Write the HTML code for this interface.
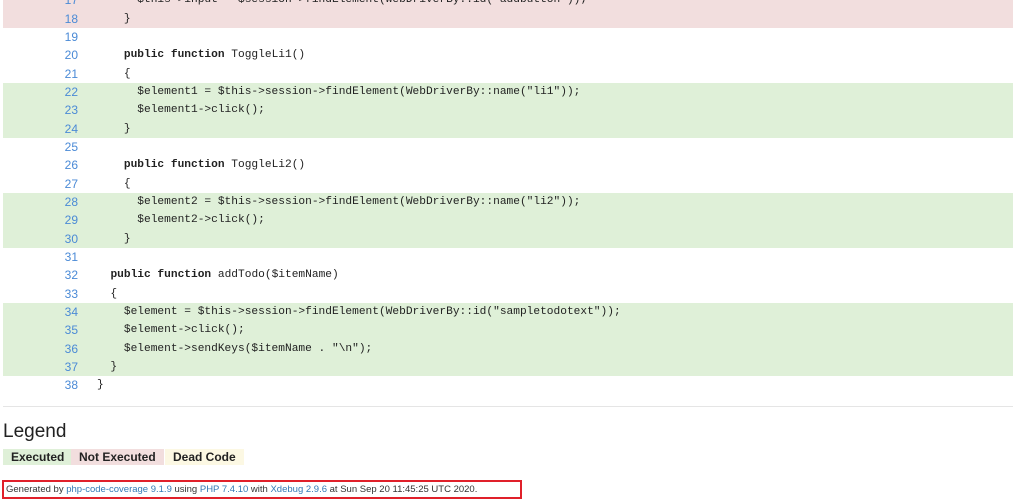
<!DOCTYPE html>
<html><head><meta charset="utf-8"><style>
*{margin:0;padding:0;box-sizing:border-box}
body{width:1024px;height:500px;overflow:hidden;background:#fff;font-family:"Liberation Sans",sans-serif;color:#333;position:relative}
.code{position:absolute;left:3px;top:-8.7px;width:1010px}
.r{height:18.33px;position:relative;font-family:"Liberation Mono",monospace;font-size:11.2px;line-height:18.33px;white-space:pre;color:#222}
.r .n{position:absolute;left:0;width:75px;text-align:right;color:#4a8ad6;font-family:"Liberation Sans",sans-serif;font-size:12px}
.r .c{position:absolute;left:94px}
.g{background:#dff0d8}.d{background:#f2dede}
b{font-weight:bold}
hr{position:absolute;left:3px;top:406px;width:1010px;border:0;border-top:1px solid #e5e5e5}
h2{position:absolute;left:3px;top:421px;font-size:19px;font-weight:normal;color:#222}
.lg{position:absolute;top:449px;height:16px;font-size:12px;font-weight:bold;line-height:16px;padding:0 8px;color:#222}
.foot{position:absolute;left:2px;top:480px;width:520px;height:19px;border:2px solid #e0202a;font-size:9.5px;line-height:15px;padding-left:2px;color:#333}
.foot a{color:#337ab7;text-decoration:none}
</style></head><body>
<div class="code">
<div class="r d"><span class="n">17</span><span class="c">      $this-&gt;input = $session-&gt;findElement(WebDriverBy::id("addbutton"));</span></div>
<div class="r d"><span class="n">18</span><span class="c">    }</span></div>
<div class="r"><span class="n">19</span><span class="c"></span></div>
<div class="r"><span class="n">20</span><span class="c">    <b>public function</b> ToggleLi1()</span></div>
<div class="r"><span class="n">21</span><span class="c">    {</span></div>
<div class="r g"><span class="n">22</span><span class="c">      $element1 = $this-&gt;session-&gt;findElement(WebDriverBy::name("li1"));</span></div>
<div class="r g"><span class="n">23</span><span class="c">      $element1-&gt;click();</span></div>
<div class="r g"><span class="n">24</span><span class="c">    }</span></div>
<div class="r"><span class="n">25</span><span class="c"></span></div>
<div class="r"><span class="n">26</span><span class="c">    <b>public function</b> ToggleLi2()</span></div>
<div class="r"><span class="n">27</span><span class="c">    {</span></div>
<div class="r g"><span class="n">28</span><span class="c">      $element2 = $this-&gt;session-&gt;findElement(WebDriverBy::name("li2"));</span></div>
<div class="r g"><span class="n">29</span><span class="c">      $element2-&gt;click();</span></div>
<div class="r g"><span class="n">30</span><span class="c">    }</span></div>
<div class="r"><span class="n">31</span><span class="c"></span></div>
<div class="r"><span class="n">32</span><span class="c">  <b>public function</b> addTodo($itemName)</span></div>
<div class="r"><span class="n">33</span><span class="c">  {</span></div>
<div class="r g"><span class="n">34</span><span class="c">    $element = $this-&gt;session-&gt;findElement(WebDriverBy::id("sampletodotext"));</span></div>
<div class="r g"><span class="n">35</span><span class="c">    $element-&gt;click();</span></div>
<div class="r g"><span class="n">36</span><span class="c">    $element-&gt;sendKeys($itemName . "\n");</span></div>
<div class="r g"><span class="n">37</span><span class="c">  }</span></div>
<div class="r"><span class="n">38</span><span class="c">}</span></div>
</div>
<hr>
<h2>Legend</h2>
<div class="lg" style="left:3px;background:#dff0d8">Executed</div>
<div class="lg" style="left:71px;background:#f2dede">Not Executed</div>
<div class="lg" style="left:165px;background:#fcf8e3">Dead Code</div>
<div class="foot">Generated by <a>php-code-coverage 9.1.9</a> using <a>PHP 7.4.10</a> with <a>Xdebug 2.9.6</a> at Sun Sep 20 11:45:25 UTC 2020.</div>
</body></html>
